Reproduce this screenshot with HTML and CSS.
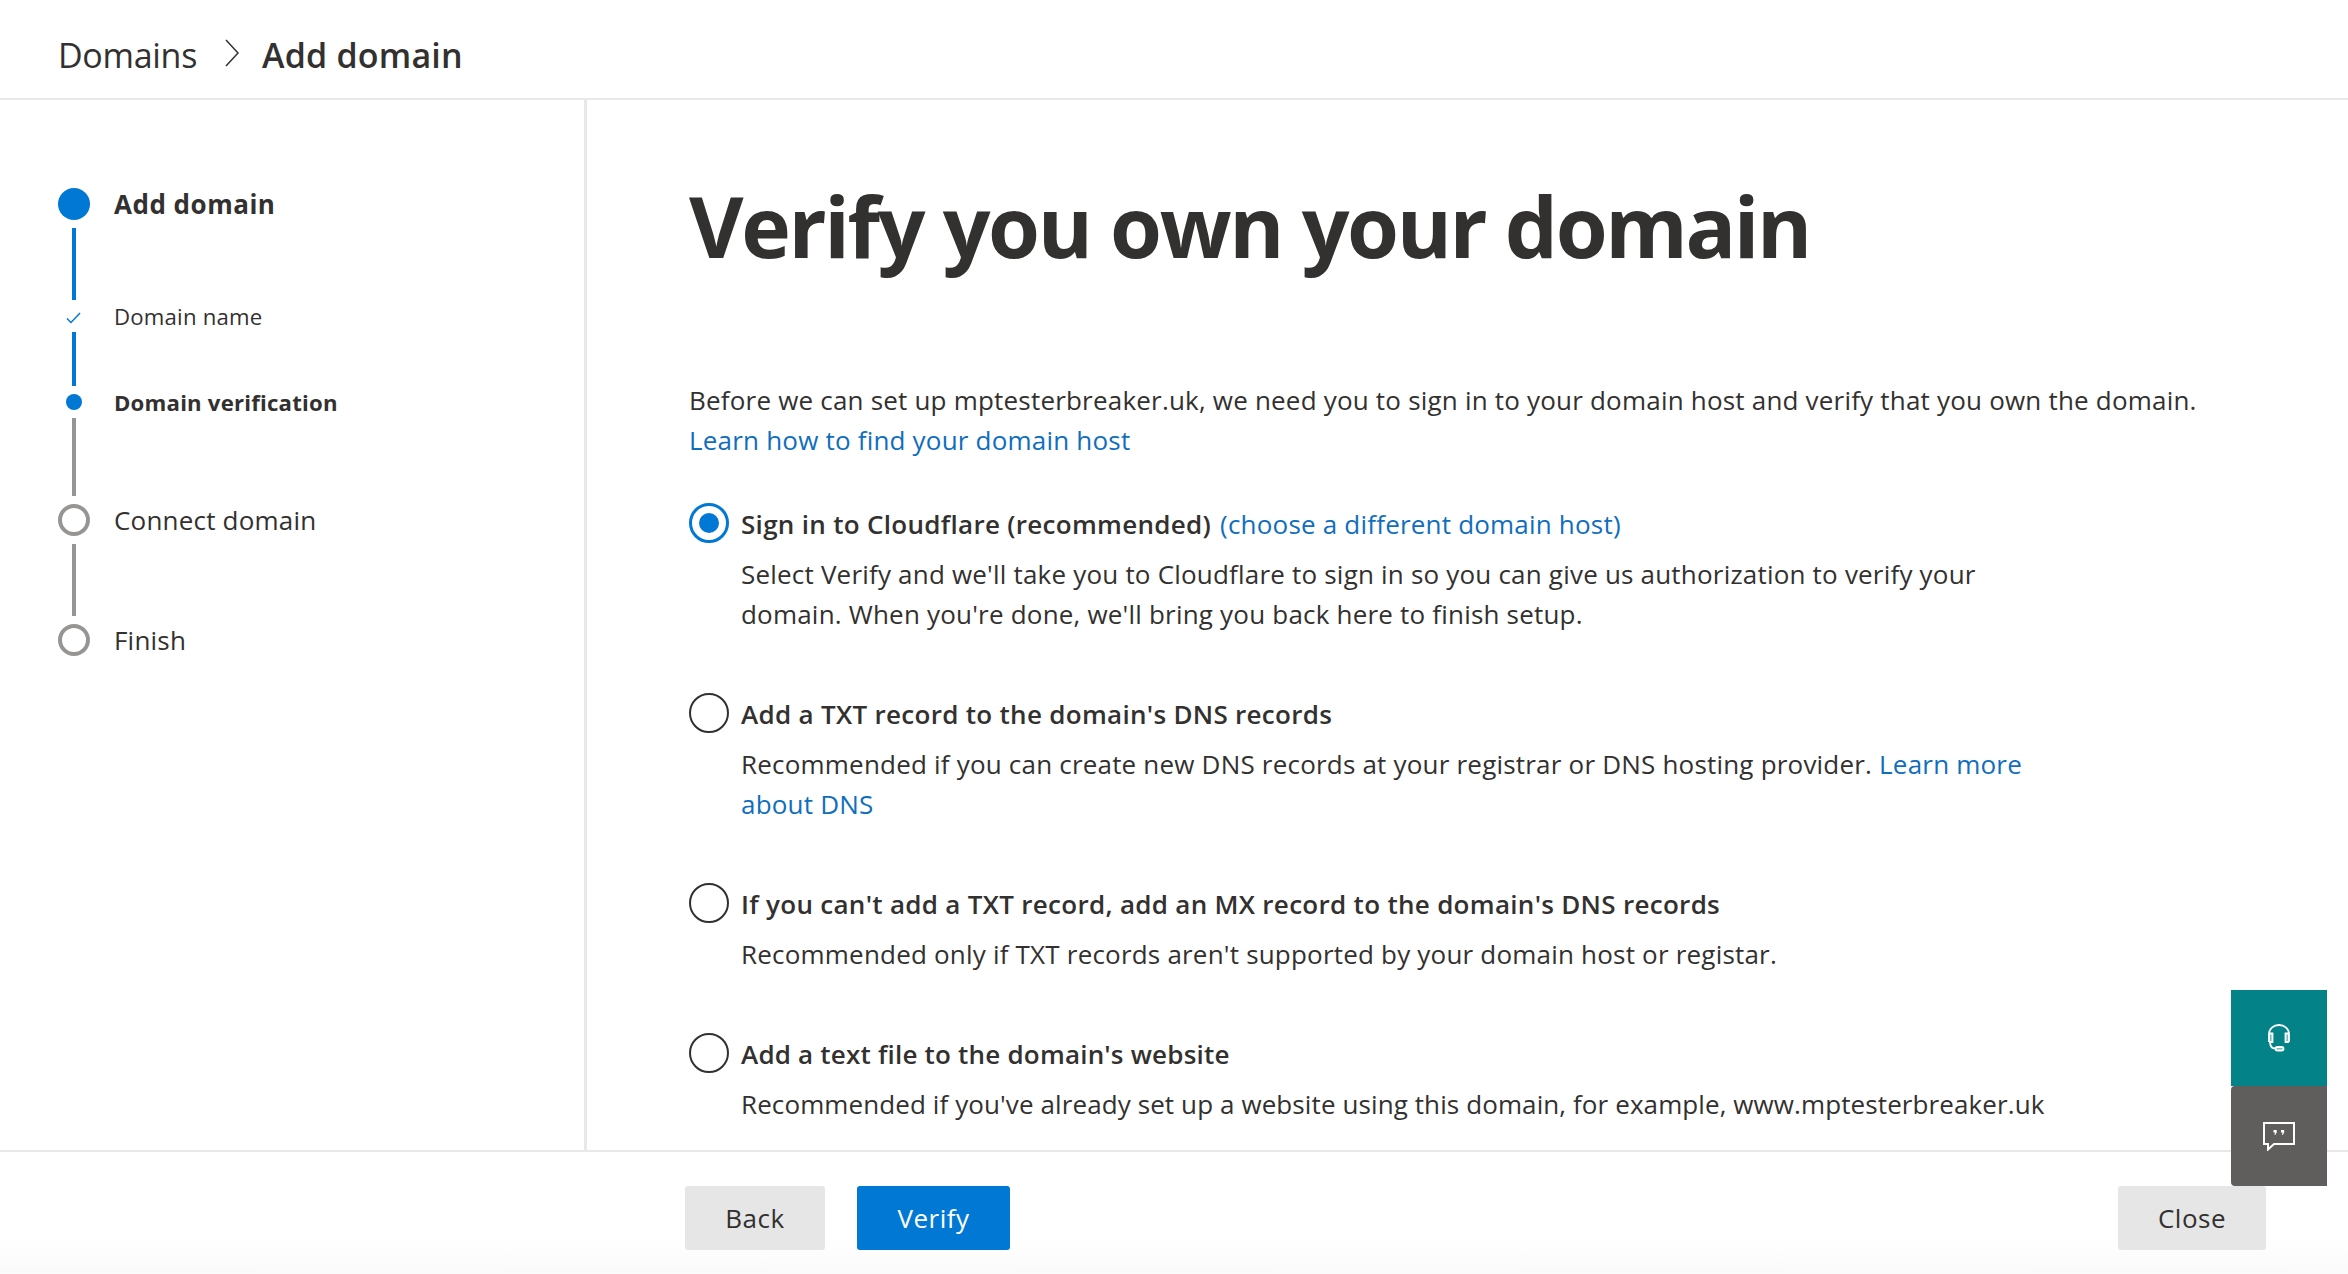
FILE: index.html
```html
<!DOCTYPE html>
<html lang="en">
<head>
<meta charset="utf-8">
<title>Add domain</title>
<link rel="stylesheet" href="styles.css">
</head>
<body>
<header class="topbar">
  <span class="crumb">Domains</span>
  <svg class="crumb-sep" viewBox="0 0 14 28" width="14" height="28"><path d="M1 1l12 13L1 27" fill="none" stroke="#323130" stroke-width="1.5"/></svg>
  <span class="crumb crumb-current">Add domain</span>
</header>
<div class="main">
  <nav class="sidebar">
    <div class="step"><span class="slot"><span class="dot dot-lg"></span></span><span class="label label-strong label-main">Add domain</span></div>
    <div class="conn conn-blue conn-a"></div>
    <div class="step step-sub">
      <span class="slot"><svg class="check" viewBox="0 0 15 12" width="15" height="12"><path d="M1 6.500l4 4L14 1" fill="none" stroke="#0078d4" stroke-width="1.500"/></svg></span>
      <span class="label label-sm">Domain name</span>
    </div>
    <div class="conn conn-blue conn-b"></div>
    <div class="step step-sub"><span class="slot"><span class="dot dot-sm"></span></span><span class="label label-sm label-strong">Domain verification</span></div>
    <div class="conn conn-grey conn-c"></div>
    <div class="step"><span class="slot"><span class="ring"></span></span><span class="label">Connect domain</span></div>
    <div class="conn conn-grey conn-d"></div>
    <div class="step"><span class="slot"><span class="ring"></span></span><span class="label">Finish</span></div>
  </nav>
  <main class="content">
    <h1 class="title">Verify you own your domain</h1>
    <p class="intro">Before we can set up mptesterbreaker.uk, we need you to sign in to your domain host and verify that you own the domain.<br><a class="link" href="#">Learn how to find your domain host</a></p>
    <div class="option">
      <span class="radio radio-on"></span>
      <div class="option-head"><strong>Sign in to Cloudflare (recommended)</strong><a class="link link-after" href="#">(choose a different domain host)</a></div>
      <p class="option-desc">Select Verify and we'll take you to Cloudflare to sign in so you can give us authorization to verify your domain. When you're done, we'll bring you back here to finish setup.</p>
    </div>
    <div class="option">
      <span class="radio"></span>
      <div class="option-head"><strong>Add a TXT record to the domain's DNS records</strong></div>
      <p class="option-desc">Recommended if you can create new DNS records at your registrar or DNS hosting provider. <a class="link" href="#">Learn more about DNS</a></p>
    </div>
    <div class="option">
      <span class="radio"></span>
      <div class="option-head"><strong>If you can't add a TXT record, add an MX record to the domain's DNS records</strong></div>
      <p class="option-desc">Recommended only if TXT records aren't supported by your domain host or registar.</p>
    </div>
    <div class="option">
      <span class="radio"></span>
      <div class="option-head"><strong class="tight">Add a text file to the domain's website</strong></div>
      <p class="option-desc tight">Recommended if you've already set up a website using this domain, for example, www.mptesterbreaker.uk</p>
    </div>
  </main>
</div>
<footer class="footer">
  <button class="btn btn-back">Back</button>
  <button class="btn btn-primary">Verify</button>
  <button class="btn btn-close">Close</button>
</footer>
<div class="float">
  <button class="float-btn float-teal" aria-label="Support">
    <svg viewBox="0 0 24 29" width="24" height="29" fill="none" stroke="#fff" stroke-width="1.800"><path d="M2 18V10a10 9 0 0 1 20 0v8"/><path d="M2 9.500H5.500v8.500H2M22 9.500H18.500v8.500H22" fill="#fff" fill-opacity=".45"/><path d="M3 18c0 4 2 6.500 5.500 6.500"/><rect x="8.500" y="23" width="8" height="3.500" rx="1.750" fill="#fff" fill-opacity=".45"/></svg>
  </button>
  <button class="float-btn float-grey" aria-label="Feedback">
    <svg viewBox="0 0 32 29" width="32" height="29" fill="none"><path d="M1 1h30v21H11l-6 5.500V22H1z" stroke="#fff" stroke-width="2"/><path d="M10.500 8h3.200v2.500L12.200 13h-.7l.5-2.500h-1.500zM18 8h3.200v2.500L19.700 13H19l.5-2.500H18z" fill="#fff"/></svg>
  </button>
</div>
</body>
</html>
```
FILE: styles.css
```css
* { box-sizing: border-box; }
html, body { height: 100%; }
body {
  margin: 0;
  height: 100vh;
  overflow: hidden;
  display: flex;
  flex-direction: column;
  background: #fff;
  color: #323130;
  font-family: "Open Sans", "Noto Sans", "Liberation Sans", sans-serif;
  font-size: 26px;
  letter-spacing: 0.2px;
  line-height: 40px;
}
.topbar {
  flex: none;
  height: 100px;
  border-bottom: 2px solid #e8e8e8;
  display: flex;
  align-items: center;
  padding: 12px 0 0 58px;
  font-size: 34px;
  letter-spacing: 0;
}
.crumb { letter-spacing: -0.3px; }
.crumb-current { font-weight: 600; letter-spacing: 0.2px; }
.crumb-sep { margin: -4px 23px 0 28px; }
.main { flex: 1; min-height: 0; display: flex; overflow: hidden; }
.sidebar {
  flex: none;
  width: 587px;
  border-right: 3px solid #e8e8e8;
  padding: 88px 0 0 58px;
}
.step { display: flex; align-items: center; height: 32px; }
.slot { width: 32px; display: flex; justify-content: center; align-items: center; margin-right: 24px; }
.check { margin: 3px 0 0 -2px; }
.label { white-space: nowrap; }
.label-strong { font-weight: 700; }
.label-main { letter-spacing: 0.5px; }
.label-sm { font-size: 22.200px; padding-top: 2px; }
.dot { display: block; border-radius: 50%; background: #0078d4; }
.dot-lg { width: 32px; height: 32px; }
.dot-sm { width: 16px; height: 16px; }
.ring { display: block; width: 32px; height: 32px; border-radius: 50%; border: 4px solid #979593; }
.conn { width: 4px; margin-left: 14px; }
.conn-blue { background: #0078d4; }
.conn-grey { background: #979593; }
.conn-a { height: 72px; margin-top: 8px; }
.conn-b { height: 54px; }
.conn-c { height: 78px; margin-bottom: 8px; }
.conn-d { height: 72px; margin-top: 8px; margin-bottom: 8px; }
.content { flex: 1; min-width: 0; padding: 0 0 0 102px; overflow: hidden; }
.title { margin: 66px 0 94px; font-size: 84px; line-height: 120px; font-weight: 700; letter-spacing: -2.350px; white-space: nowrap; }
.intro { margin: 0 0 44px; white-space: nowrap; }
.link { color: #106ebe; text-decoration: none; }
.link-after { margin-left: 9px; }
.option { position: relative; padding-left: 52px; margin-bottom: 60px; }
.option-head { height: 40px; white-space: nowrap; }
.option-head strong { font-weight: 600; letter-spacing: 0.3px; }
.option-head strong.tight { letter-spacing: 0.2px; }
.option-desc { margin: 10px 0 0; max-width: 1320px; }
.option-desc.tight { letter-spacing: 0.100px; }
.radio { position: absolute; left: 0; top: -1px; width: 40px; height: 40px; border-radius: 50%; border: 2px solid #323130; background: #fff; }
.radio-on { border: 3px solid #0078d4; }
.radio-on::after { content: ""; position: absolute; left: 7px; top: 7px; width: 20px; height: 20px; border-radius: 50%; background: #0078d4; }
.footer {
  flex: none;
  height: 124px;
  border-top: 2px solid #e8e8e8;
  display: flex;
  padding: 34px 82px 0 685px;
  gap: 32px;
  background: linear-gradient(#fff 70%, #fafafa);
}
.btn { height: 64px; border: 0; border-radius: 3px; font: inherit; font-weight: 500; letter-spacing: 0.5px; color: #323130; background: #e6e6e6; }
.btn-back { width: 140px; }
.btn-primary { width: 153px; background: #0078d4; color: #fff; }
.btn-close { width: 148px; margin-left: auto; }
.float { position: fixed; left: 2231px; top: 990px; width: 96px; }
.float-btn { display: flex; width: 96px; border: 0; padding: 0; align-items: center; justify-content: center; }
.float-teal { height: 96px; background: #038387; }
.float-grey { height: 100px; background: #605e5c; border-radius: 4px 0 0 4px; }
```
